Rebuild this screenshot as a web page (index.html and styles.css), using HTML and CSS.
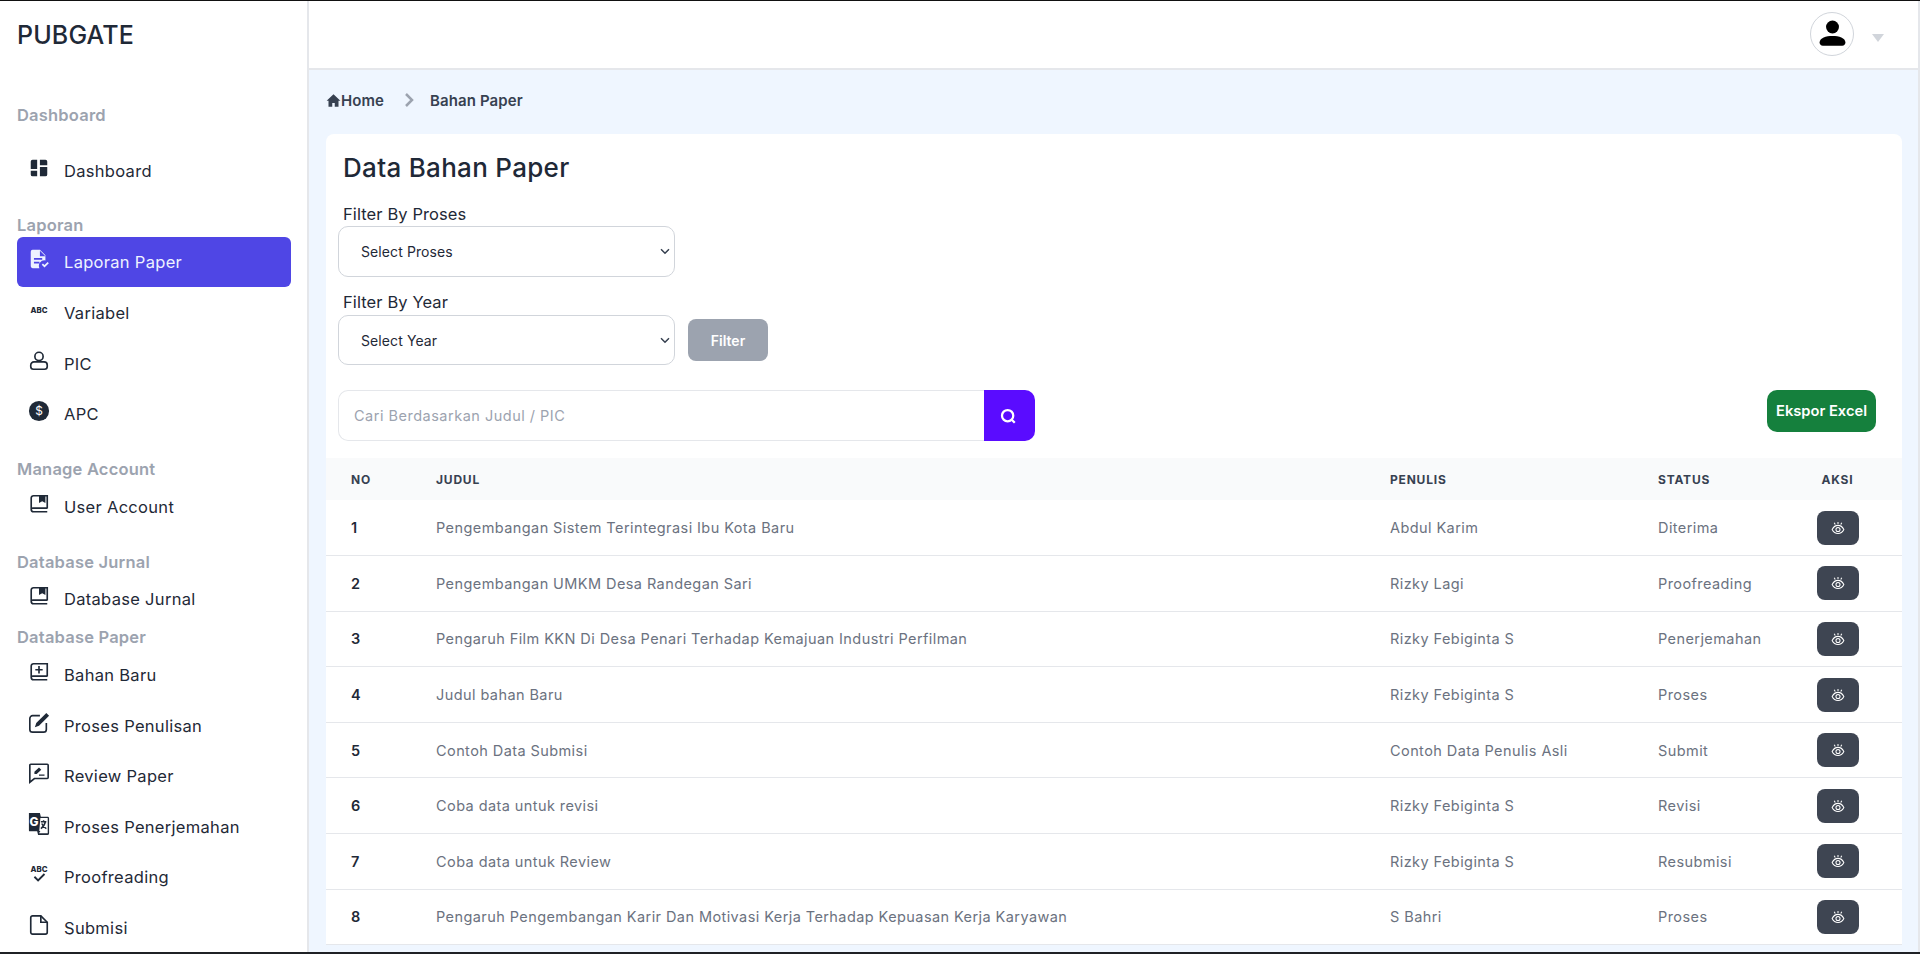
FILE: index.html
```html
<!DOCTYPE html>
<html lang="en">
<head>
  <meta charset="UTF-8">
  <meta name="viewport" content="width=device-width, initial-scale=1.0">
  <title>Data Bahan Paper</title>
  <link rel="stylesheet" href="styles.css">
</head>
<body>
  <svg class="icon-defs" aria-hidden="true">
    <symbol id="eye" viewBox="0 0 24 24"><path d="M2 14.500c2.500-5 6-7 10-7s7.500 2 10 7c-2.500 5-6 7-10 7s-7.500-2-10-7z"/><circle cx="12" cy="14.500" r="3.500"/><path d="M12 1.500v3.500M5.500 3l1.800 3M18.500 3l-1.800 3"/></symbol>
  </svg>

  <div class="app">
    <!-- Sidebar -->
    <aside class="sidebar">
      <div class="logo">PUBGATE</div>

      <div class="nav-title nav-title-first">Dashboard</div>
      <a class="nav-item nav-item-spaced" href="#">
        <svg class="nav-icon" viewBox="0 0 24 24"><path d="M3 5a2 2 0 0 1 2-2h5v10H3zM13 3h6a2 2 0 0 1 2 2v4h-8zM13 11h8v8a2 2 0 0 1-2 2h-6zM3 15h7v6H5a2 2 0 0 1-2-2z"/></svg>
        Dashboard
      </a>

      <div class="nav-title nav-title-tight">Laporan</div>
      <a class="nav-item active" href="#">
        <svg class="nav-icon" viewBox="0 0 24 24"><path d="M5 2h8l6 6v5.500a6 6 0 0 0-6.500 8.500H5a2 2 0 0 1-2-2V4a2 2 0 0 1 2-2zm8 1v6h6zM6.500 11v1.800h9V11zm0 4v1.800h6V15zm8.500 3.200 1.300-1.300 1.700 1.700 3.400-3.400 1.300 1.300-4.700 4.700z"/></svg>
        Laporan Paper
      </a>
      <a class="nav-item" href="#">
        <svg class="nav-icon" viewBox="0 0 24 24"><text class="icon-abc" x="12" y="15" text-anchor="middle">ABC</text></svg>
        Variabel
      </a>
      <a class="nav-item" href="#">
        <svg class="nav-icon nav-icon-line" viewBox="0 0 24 24"><circle cx="12" cy="7" r="4.500"/><path d="M6.500 13h11a3.500 3.500 0 0 1 3.500 3.500V18a3 3 0 0 1-3 3H6a3 3 0 0 1-3-3v-1.500A3.500 3.500 0 0 1 6.500 13z"/></svg>
        PIC
      </a>
      <a class="nav-item" href="#">
        <svg class="nav-icon" viewBox="0 0 24 24"><circle cx="12" cy="12" r="11"/><text class="icon-dollar" x="12" y="16.500" text-anchor="middle">$</text></svg>
        APC
      </a>

      <div class="nav-title nav-title-section">Manage Account</div>
      <a class="nav-item" href="#">
        <svg class="nav-icon nav-icon-line" viewBox="0 0 24 24"><path d="M21 17V3H6a2.500 2.500 0 0 0-2.500 2.500V18A2.500 2.500 0 0 0 6 20.500h15M3.500 18A2 2 0 0 1 6 16.500h15"/><path class="fill" d="M12 3h7v8l-3.500-2-3.500 2z"/></svg>
        User Account
      </a>

      <div class="nav-title nav-title-section">Database Jurnal</div>
      <a class="nav-item" href="#">
        <svg class="nav-icon nav-icon-line" viewBox="0 0 24 24"><path d="M21 17V3H6a2.500 2.500 0 0 0-2.500 2.500V18A2.500 2.500 0 0 0 6 20.500h15M3.500 18A2 2 0 0 1 6 16.500h15"/><path class="fill" d="M12 3h7v8l-3.500-2-3.500 2z"/></svg>
        Database Jurnal
      </a>

      <div class="nav-title nav-title-paper">Database Paper</div>
      <a class="nav-item" href="#">
        <svg class="nav-icon nav-icon-line" viewBox="0 0 24 24"><path d="M21 17V3H6a2.500 2.500 0 0 0-2.500 2.500V18A2.500 2.500 0 0 0 6 20.500h15M3.500 18A2 2 0 0 1 6 16.500h15M12 5.500v8M8 9.500h8"/></svg>
        Bahan Baru
      </a>
      <a class="nav-item" href="#">
        <svg class="nav-icon nav-icon-line" viewBox="0 0 24 24"><path d="M13 4H5a3 3 0 0 0-3 3v12a3 3 0 0 0 3 3h12a3 3 0 0 0 3-3v-7"/><path class="fill" d="M20 1l3 3L12 15l-4.500 1.500L9 12z"/></svg>
        Proses Penulisan
      </a>
      <a class="nav-item" href="#">
        <svg class="nav-icon nav-icon-line" viewBox="0 0 24 24"><path d="M3 2.500h18a1 1 0 0 1 1 1V17a1 1 0 0 1-1 1H7l-5 4V3.500a1 1 0 0 1 1-1z"/><path class="fill" d="M12 6l2.500 2.500-5 4.500H7v-2.500zM12 13.500h6V15h-6z"/></svg>
        Review Paper
      </a>
      <a class="nav-item" href="#">
        <svg class="nav-icon" viewBox="0 0 24 24"><path d="M1 0h12l1 4h8a2 2 0 0 1 1 2v16a2 2 0 0 1-2 2H11l-1-4H2a1 1 0 0 1-1-1z"/><path class="icon-paper" d="M13.500 5.500h8V22h-9.500l1.500-2.500h-1.200z"/><text class="icon-g" x="6.500" y="14" text-anchor="middle">G</text><path class="icon-stroke" d="M14 9.500h6M17 8v1.500M19 9.500c-1 4-2.500 6-5 7.500M15 11.500c1 2.500 3 4.500 5 5.500"/></svg>
        Proses Penerjemahan
      </a>
      <a class="nav-item" href="#">
        <svg class="nav-icon" viewBox="0 0 24 24"><text class="icon-abc" x="12" y="10" text-anchor="middle">ABC</text><path class="icon-check" d="M7 15l4 4 7-7"/></svg>
        Proofreading
      </a>
      <a class="nav-item" href="#">
        <svg class="nav-icon nav-icon-line" viewBox="0 0 24 24"><path d="M5 2h9l7 7v11a2 2 0 0 1-2 2H5a2 2 0 0 1-2-2V4a2 2 0 0 1 2-2z"/><path d="M14 2v7h7"/></svg>
        Submisi
      </a>
    </aside>

    <div class="main">
      <!-- Header -->
      <header class="topbar">
        <div class="avatar">
          <svg viewBox="0 0 24 24"><circle cx="12" cy="7" r="5"/><path d="M12 14c5 0 10 1.500 10 5 0 1.500-1 2.500-2.500 2.500h-15C3 21.500 2 20.500 2 19c0-3.500 5-5 10-5z"/></svg>
        </div>
        <span class="caret"></span>
      </header>

      <div class="content">
        <!-- Breadcrumb -->
        <nav class="breadcrumb">
          <a class="crumb" href="#">
            <svg viewBox="0 0 24 24"><path d="M12 2 1 12.500h3V22h6v-6h4v6h6v-9.500h3z"/></svg>
            Home
          </a>
          <svg class="crumb-sep" viewBox="0 0 10 16"><path d="M2 2l6 6-6 6"/></svg>
          <span class="crumb">Bahan Paper</span>
        </nav>

        <section class="card">
          <h1>Data Bahan Paper</h1>

          <!-- Filter -->
          <div class="filters">
            <label class="filter-label" for="proses">Filter By Proses</label>
            <div class="filter-row">
              <select id="proses" class="filter-select"><option>Select Proses</option></select>
            </div>
            <label class="filter-label filter-label-next" for="year">Filter By Year</label>
            <div class="filter-row">
              <select id="year" class="filter-select filter-select-short"><option>Select Year</option></select>
              <button class="btn-filter" type="button">Filter</button>
            </div>
          </div>

          <div class="toolbar">
            <form class="search">
              <input type="text" placeholder="Cari Berdasarkan Judul / PIC">
              <button type="button" aria-label="Cari">
                <svg viewBox="0 0 24 24"><circle cx="11.500" cy="11.500" r="7.500"/><path d="M17 17l4 4"/></svg>
              </button>
            </form>
            <button class="btn-excel" type="button">Ekspor Excel</button>
          </div>

          <table class="data-table">
            <colgroup>
              <col class="col-no"><col class="col-judul"><col class="col-penulis"><col class="col-status"><col>
            </colgroup>
            <thead>
              <tr><th>No</th><th>Judul</th><th>Penulis</th><th>Status</th><th class="center">Aksi</th></tr>
            </thead>
            <tbody>
              <tr>
                <td class="num">1</td><td>Pengembangan Sistem Terintegrasi Ibu Kota Baru</td><td>Abdul Karim</td><td>Diterima</td>
                <td class="center"><button class="btn-view" type="button"><svg><use href="#eye"/></svg></button></td>
              </tr>
              <tr>
                <td class="num">2</td><td>Pengembangan UMKM Desa Randegan Sari</td><td>Rizky Lagi</td><td>Proofreading</td>
                <td class="center"><button class="btn-view" type="button"><svg><use href="#eye"/></svg></button></td>
              </tr>
              <tr>
                <td class="num">3</td><td>Pengaruh Film KKN Di Desa Penari Terhadap Kemajuan Industri Perfilman</td><td>Rizky Febiginta S</td><td>Penerjemahan</td>
                <td class="center"><button class="btn-view" type="button"><svg><use href="#eye"/></svg></button></td>
              </tr>
              <tr>
                <td class="num">4</td><td>Judul bahan Baru</td><td>Rizky Febiginta S</td><td>Proses</td>
                <td class="center"><button class="btn-view" type="button"><svg><use href="#eye"/></svg></button></td>
              </tr>
              <tr>
                <td class="num">5</td><td>Contoh Data Submisi</td><td>Contoh Data Penulis Asli</td><td>Submit</td>
                <td class="center"><button class="btn-view" type="button"><svg><use href="#eye"/></svg></button></td>
              </tr>
              <tr>
                <td class="num">6</td><td>Coba data untuk revisi</td><td>Rizky Febiginta S</td><td>Revisi</td>
                <td class="center"><button class="btn-view" type="button"><svg><use href="#eye"/></svg></button></td>
              </tr>
              <tr>
                <td class="num">7</td><td>Coba data untuk Review</td><td>Rizky Febiginta S</td><td>Resubmisi</td>
                <td class="center"><button class="btn-view" type="button"><svg><use href="#eye"/></svg></button></td>
              </tr>
              <tr>
                <td class="num">8</td><td>Pengaruh Pengembangan Karir Dan Motivasi Kerja Terhadap Kepuasan Kerja Karyawan</td><td>S Bahri</td><td>Proses</td>
                <td class="center"><button class="btn-view" type="button"><svg><use href="#eye"/></svg></button></td>
              </tr>
            </tbody>
          </table>
        </section>
      </div>
    </div>
  </div>
</body>
</html>
```

FILE: styles.css
```css
/* General Styles */
* {
  box-sizing: border-box;
}

body {
  font-family: 'Inter', 'Lato', sans-serif;
  background: #fff;
  margin: 0;
  color: #1f2937;
  height: 100vh;
  overflow: hidden;
  border-top: 1px solid #111;
  border-bottom: 2px solid #1f2125;
}

a {
  color: inherit;
  text-decoration: none;
}

.icon-defs {
  display: none;
}

.app {
  display: flex;
  height: 100%;
  border-right: 2px solid #e5e7eb;
}

/* Sidebar */
.sidebar {
  flex: 0 0 309px;
  padding: 0 16px 0 17px;
  border-right: 2px solid #e5e7eb;
  overflow: hidden;
}

.logo {
  height: 68px;
  line-height: 68px;
  font-size: 25px;
  font-weight: 500;
  letter-spacing: 0.150px;
  color: #1f2937;
}

.nav-title {
  height: 24px;
  line-height: 24px;
  font-size: 16.500px;
  font-weight: 600;
  letter-spacing: 0.2px;
  color: #9ca3af;
  white-space: nowrap;
}

.nav-title-first {
  margin-top: 34px;
  margin-bottom: 18px;
}

.nav-title-tight {
  margin-top: 17px;
}

.nav-title-section {
  margin-top: 18px;
}

.nav-title-paper {
  margin-top: 1px;
}

.nav-item {
  display: flex;
  align-items: center;
  height: 50.6px;
  padding: 1px 0 0 11px;
  gap: 14px;
  font-size: 16.500px;
  letter-spacing: 0.3px;
  color: #1f2937;
  border-radius: 6px;
}

.nav-item.active {
  background: #4f46e5;
  color: #eef2ff;
}

.nav-icon {
  flex: 0 0 22px;
  width: 22px;
  height: 22px;
  margin-top: -6px;
  fill: currentColor;
}

.nav-icon-line {
  fill: none;
  stroke: currentColor;
  stroke-width: 1.800;
}

.nav-icon-line .fill {
  fill: currentColor;
  stroke: none;
}

.icon-abc {
  font-size: 8.500px;
  font-weight: 800;
  letter-spacing: 0;
  font-family: 'Inter', sans-serif;
}

.icon-dollar {
  font-size: 13px;
  letter-spacing: 0;
  fill: #fff;
  font-family: 'Inter', sans-serif;
}

.icon-g {
  font-size: 13px;
  font-weight: 800;
  letter-spacing: 0;
  fill: #fff;
  font-family: 'Inter', sans-serif;
}

.icon-paper {
  fill: #fff;
}

.icon-stroke,
.icon-check {
  fill: none;
  stroke: currentColor;
  stroke-width: 1.600;
}

.icon-check {
  stroke-width: 2;
}

/* Header */
.main {
  flex: 1;
  min-width: 0;
  display: flex;
  flex-direction: column;
}

.topbar {
  flex: 0 0 69px;
  display: flex;
  align-items: center;
  justify-content: flex-end;
  gap: 18px;
  padding-right: 34px;
  background: #fff;
  border-bottom: 2px solid #e5e7eb;
}

.avatar {
  display: flex;
  align-items: center;
  justify-content: center;
  width: 44px;
  height: 44px;
  margin-bottom: 2px;
  border: 1px solid #d1d5db;
  border-radius: 50%;
}

.avatar svg {
  width: 31px;
  height: 31px;
}

.caret {
  width: 0;
  height: 0;
  border-left: 6.500px solid transparent;
  border-right: 6.500px solid transparent;
  border-top: 8px solid #d1d5db;
  margin-top: 6px;
}

/* Content */
.content {
  flex: 1;
  min-height: 0;
  overflow: hidden;
  padding: 0 16px 0 17px;
  background: #eff6ff;
}

.breadcrumb {
  display: flex;
  align-items: center;
  height: 64px;
  padding-bottom: 4px;
  font-size: 15px;
  font-weight: 600;
  letter-spacing: 0.1px;
  color: #374151;
}

.crumb {
  display: flex;
  align-items: center;
}

.crumb svg {
  width: 15px;
  height: 15px;
  fill: currentColor;
}

.crumb-sep {
  width: 10px;
  height: 16px;
  margin: 0 16px 0 20px;
  fill: none;
  stroke: #9ca3af;
  stroke-width: 2.500;
}

.card {
  background: #fff;
  border-radius: 8px 8px 0 0;
  padding-top: 16px;
}

.card h1 {
  margin: 0 0 15px 17px;
  height: 36px;
  line-height: 36px;
  font-size: 26px;
  font-weight: 500;
  letter-spacing: 0.3px;
  color: #1f2937;
}

/* Filter */
.filters {
  padding: 0 12px;
}

.filter-label {
  display: block;
  height: 25px;
  line-height: 26px;
  padding-left: 5px;
  font-size: 16.500px;
  letter-spacing: 0.1px;
  color: #1f2937;
}

.filter-label-next {
  margin-top: 13px;
  line-height: 24px;
}

.filter-row {
  display: flex;
  align-items: center;
  gap: 13px;
}

.filter-select {
  appearance: none;
  width: 337px;
  height: 51px;
  padding: 0 22px;
  background: #fff url("data:image/svg+xml,%3Csvg xmlns='http://www.w3.org/2000/svg' width='10' height='7' viewBox='0 0 10 7'%3E%3Cpath d='M1 1.200l4 4 4-4' fill='none' stroke='%23374151' stroke-width='1.500'/%3E%3C/svg%3E") no-repeat right 4px center;
  border: 1px solid #d1d5db;
  border-radius: 10px;
  font-family: inherit;
  font-size: 14px;
  letter-spacing: 0.1px;
  color: #1f2937;
}

.filter-select-short {
  height: 50px;
}

.btn-filter {
  width: 80px;
  height: 42px;
  background: #9ca3af;
  border: 0;
  border-radius: 8px;
  font-family: inherit;
  font-size: 14px;
  font-weight: 600;
  color: #fff;
}

.toolbar {
  display: flex;
  justify-content: space-between;
  align-items: flex-start;
  padding: 0 26px 0 12px;
  margin-top: 25px;
}

.search {
  display: flex;
  width: 697px;
  height: 51px;
}

.search input {
  flex: 1;
  min-width: 0;
  padding: 0 15px;
  border: 1px solid #e5e7eb;
  border-right: 0;
  border-radius: 10px 0 0 10px;
  font-family: inherit;
  font-size: 14.500px;
  letter-spacing: 0.5px;
  outline: none;
}

.search input::placeholder {
  color: #9ca3af;
}

.search button {
  flex: 0 0 51px;
  display: flex;
  align-items: center;
  justify-content: center;
  padding: 0 3px 0 0;
  background: #5a0cff;
  border: 0;
  border-radius: 0 10px 10px 0;
}

.search svg {
  width: 18px;
  height: 18px;
  fill: none;
  stroke: #fff;
  stroke-width: 3;
}

.btn-excel {
  width: 109px;
  height: 42px;
  background: #15803d;
  border: 0;
  border-radius: 10px;
  font-family: inherit;
  font-size: 14.700px;
  font-weight: 600;
  color: #fff;
}

/* Table */
.data-table {
  width: 100%;
  margin-top: 17px;
  border-collapse: collapse;
  table-layout: fixed;
}

.col-no {
  width: 85px;
}

.col-penulis {
  width: 268px;
}

.col-status {
  width: 140px;
}

.col-judul {
  width: 954px;
}

.data-table th {
  height: 42px;
  padding: 0 0 0 25px;
  background: #f9fafb;
  text-align: left;
  text-transform: uppercase;
  font-size: 12px;
  font-weight: 700;
  letter-spacing: 0.800px;
  color: #374151;
}

.data-table td {
  height: 55.600px;
  padding: 0 0 0 25px;
  border-bottom: 1px solid #e5e7eb;
  font-size: 14.500px;
  letter-spacing: 0.420px;
  color: #6b7280;
  white-space: nowrap;
}

.data-table td.num {
  font-weight: 600;
  color: #1f2937;
}

.data-table .center {
  padding: 0;
  text-align: center;
}

.btn-view {
  display: inline-flex;
  align-items: center;
  justify-content: center;
  width: 42px;
  height: 34px;
  vertical-align: middle;
  background: #3e4552;
  border: 0;
  border-radius: 8px;
}

.btn-view svg {
  width: 14px;
  height: 14px;
  fill: none;
  stroke: #fff;
  stroke-width: 1.800;
}
```
